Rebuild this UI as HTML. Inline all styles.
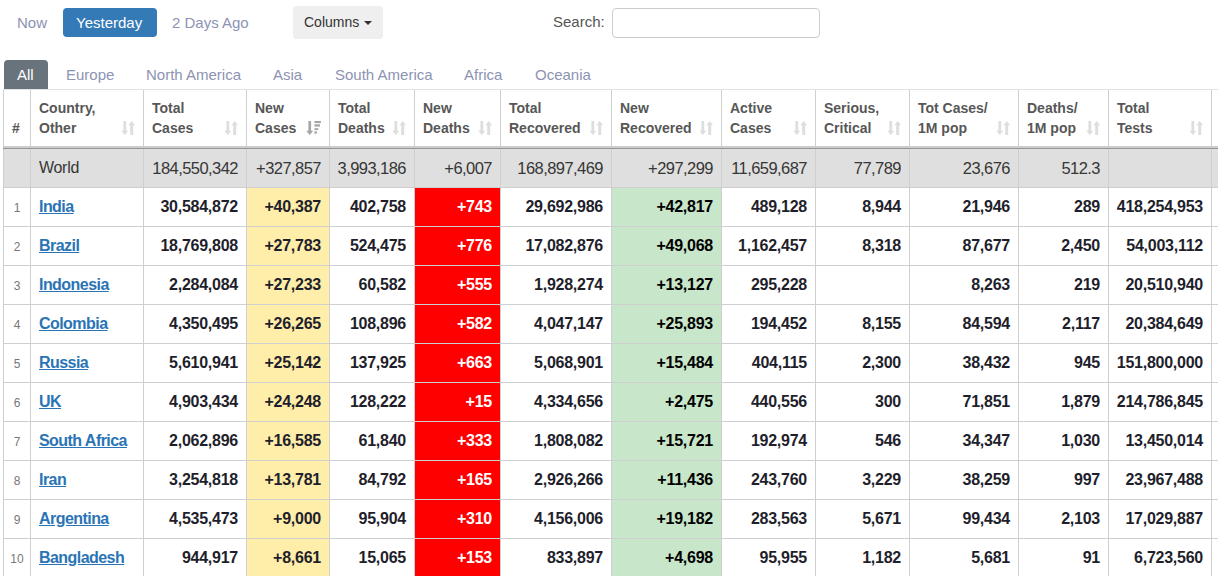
<!DOCTYPE html>
<html><head><meta charset="utf-8"><title>Coronavirus table</title>
<style>
html,body{margin:0;padding:0;background:#fff;}
body{width:1218px;height:576px;overflow:hidden;position:relative;font-family:"Liberation Sans",sans-serif;}
.a{position:absolute;white-space:nowrap;}
.nav{font-size:15px;color:#8c93b3;line-height:20px;}
.btnp{position:absolute;left:63px;top:8px;width:94px;height:29px;background:#337ab7;border-radius:4px;}
.btnp span{position:absolute;left:13px;top:5px;font-size:15px;color:#fff;line-height:20px;}
.colbtn{position:absolute;left:293px;top:6px;width:90px;height:33px;background:#efefef;border-radius:4px;}
.colbtn span{position:absolute;left:11px;top:6px;font-size:14px;color:#333;line-height:20px;}
.caret{position:absolute;left:71px;top:15px;width:0;height:0;border-left:4px solid transparent;border-right:4px solid transparent;border-top:4px solid #333;}
.search{font-size:15px;color:#555;line-height:20px;}
.inp{position:absolute;left:612px;top:8px;width:206px;height:28px;border:1px solid #cccccc;border-radius:4px;}
.tabact{position:absolute;left:4px;top:60px;width:44px;height:30px;background:#68737c;border-radius:4px 4px 0 0;}
.tabact span{position:absolute;left:13px;top:5px;font-size:15px;color:#fff;line-height:20px;}
.tab{font-size:15px;color:#8c93b3;line-height:20px;}
.tbl{position:absolute;left:3px;top:89px;border-top:1px solid #e2e2e2;}
.r{position:relative;display:flex;}
.c{position:relative;box-sizing:border-box;border-left:1px solid #cfcfcf;flex:none;overflow:hidden;}
.hd .c{height:57px;}
.hd .t{position:absolute;left:8px;bottom:9px;font-size:14px;font-weight:bold;color:#575757;line-height:20px;}
.hd .si{position:absolute;right:8px;top:31px;}
.hline1{position:absolute;left:3px;top:146px;width:1215px;height:2px;background:#cdcdcd;}
.hline2{position:absolute;left:3px;top:148px;width:1215px;height:1px;background:#979797;}
.w .c{height:39px;background:#dfdfdf;border-bottom:1px solid #cfcfcf;}
.b .c{height:39px;border-bottom:1px solid #cfcfcf;}
.v{position:absolute;right:8px;top:9px;line-height:20px;}
.w .v{font-size:16.5px;letter-spacing:-0.55px;color:#363636;}
.b .v{font-size:16px;letter-spacing:-0.25px;font-weight:bold;color:#1f1f2c;}
.w .nm{position:absolute;left:8px;top:9px;font-size:16px;letter-spacing:-0.3px;color:#363636;line-height:20px;}
.b .nm{position:absolute;left:8px;top:9px;font-size:16px;letter-spacing:-0.55px;font-weight:bold;color:#2a74b6;text-decoration:underline;line-height:20px;}
.b .rk{position:absolute;left:0;width:26px;text-align:center;top:10px;font-size:12px;color:#777;line-height:20px;}
.y{background:#ffeeaa;}
.red{background:#ff0000;}
.red .v{color:#fff !important;}
.g{background:#c8e6c9;}
.g .v{color:#000 !important;}
.sy{display:inline-block;transform:none;transform-origin:0 15px;}
</style></head><body>

<span class="a nav sy" style="left:17px;top:13px">Now</span>
<div class="btnp"><span class="sy">Yesterday</span></div>
<span class="a nav sy" style="left:172px;top:13px">2 Days Ago</span>
<div class="colbtn"><span>Columns</span><i class="caret"></i></div>
<span class="a search sy" style="left:553px;top:12px">Search:</span>
<div class="inp"></div>
<div class="tabact"><span class="sy">All</span></div>
<span class="a tab sy" style="left:66px;top:65px">Europe</span>
<span class="a tab sy" style="left:146px;top:65px">North America</span>
<span class="a tab sy" style="left:273px;top:65px">Asia</span>
<span class="a tab sy" style="left:335px;top:65px">South America</span>
<span class="a tab sy" style="left:464px;top:65px">Africa</span>
<span class="a tab sy" style="left:535px;top:65px">Oceania</span>
<div class="tbl">
<div class="r hd">
<div class="c" style="width:27px"><span class="t" style="left:8px">#</span></div>
<div class="c" style="width:113px"><span class="t">Country,<br>Other</span><svg class="si" width="14" height="14" viewBox="0 0 14 14"><path d="M2.4 0h2.8v9.7h2.1L3.8 14 0.3 9.7h2.1z" fill="#dedede"/><path d="M9.2 14h3V4.3h1.9L10.7 0 7.3 4.3h1.9z" fill="#dedede"/></svg></div>
<div class="c" style="width:103px"><span class="t">Total<br>Cases</span><svg class="si" width="14" height="14" viewBox="0 0 14 14"><path d="M2.4 0h2.8v9.7h2.1L3.8 14 0.3 9.7h2.1z" fill="#dedede"/><path d="M9.2 14h3V4.3h1.9L10.7 0 7.3 4.3h1.9z" fill="#dedede"/></svg></div>
<div class="c" style="width:83px"><span class="t">New<br>Cases</span><svg class="si" width="15" height="14" viewBox="0 0 15 14"><path d="M2.4 0h2.7v9.7h2.2L3.75 14 0.2 9.7h2.2z" fill="#a6a6a6"/><rect x="8.4" y="0" width="6.5" height="2.1" fill="#a6a6a6"/><rect x="8.4" y="3.3" width="5.6" height="2.3" fill="#a6a6a6"/><rect x="8.4" y="7.2" width="4" height="1.9" fill="#a6a6a6"/><rect x="8.4" y="10.3" width="2.5" height="2.4" fill="#a6a6a6"/></svg></div>
<div class="c" style="width:85px"><span class="t">Total<br>Deaths</span><svg class="si" width="14" height="14" viewBox="0 0 14 14"><path d="M2.4 0h2.8v9.7h2.1L3.8 14 0.3 9.7h2.1z" fill="#dedede"/><path d="M9.2 14h3V4.3h1.9L10.7 0 7.3 4.3h1.9z" fill="#dedede"/></svg></div>
<div class="c" style="width:86px"><span class="t">New<br>Deaths</span><svg class="si" width="14" height="14" viewBox="0 0 14 14"><path d="M2.4 0h2.8v9.7h2.1L3.8 14 0.3 9.7h2.1z" fill="#dedede"/><path d="M9.2 14h3V4.3h1.9L10.7 0 7.3 4.3h1.9z" fill="#dedede"/></svg></div>
<div class="c" style="width:111px"><span class="t">Total<br>Recovered</span><svg class="si" width="14" height="14" viewBox="0 0 14 14"><path d="M2.4 0h2.8v9.7h2.1L3.8 14 0.3 9.7h2.1z" fill="#dedede"/><path d="M9.2 14h3V4.3h1.9L10.7 0 7.3 4.3h1.9z" fill="#dedede"/></svg></div>
<div class="c" style="width:110px"><span class="t">New<br>Recovered</span><svg class="si" width="14" height="14" viewBox="0 0 14 14"><path d="M2.4 0h2.8v9.7h2.1L3.8 14 0.3 9.7h2.1z" fill="#dedede"/><path d="M9.2 14h3V4.3h1.9L10.7 0 7.3 4.3h1.9z" fill="#dedede"/></svg></div>
<div class="c" style="width:94px"><span class="t">Active<br>Cases</span><svg class="si" width="14" height="14" viewBox="0 0 14 14"><path d="M2.4 0h2.8v9.7h2.1L3.8 14 0.3 9.7h2.1z" fill="#dedede"/><path d="M9.2 14h3V4.3h1.9L10.7 0 7.3 4.3h1.9z" fill="#dedede"/></svg></div>
<div class="c" style="width:94px"><span class="t">Serious,<br>Critical</span><svg class="si" width="14" height="14" viewBox="0 0 14 14"><path d="M2.4 0h2.8v9.7h2.1L3.8 14 0.3 9.7h2.1z" fill="#dedede"/><path d="M9.2 14h3V4.3h1.9L10.7 0 7.3 4.3h1.9z" fill="#dedede"/></svg></div>
<div class="c" style="width:109px"><span class="t">Tot&nbsp;Cases/<br>1M pop</span><svg class="si" width="14" height="14" viewBox="0 0 14 14"><path d="M2.4 0h2.8v9.7h2.1L3.8 14 0.3 9.7h2.1z" fill="#dedede"/><path d="M9.2 14h3V4.3h1.9L10.7 0 7.3 4.3h1.9z" fill="#dedede"/></svg></div>
<div class="c" style="width:90px"><span class="t">Deaths/<br>1M pop</span><svg class="si" width="14" height="14" viewBox="0 0 14 14"><path d="M2.4 0h2.8v9.7h2.1L3.8 14 0.3 9.7h2.1z" fill="#dedede"/><path d="M9.2 14h3V4.3h1.9L10.7 0 7.3 4.3h1.9z" fill="#dedede"/></svg></div>
<div class="c" style="width:103px"><span class="t">Total<br>Tests</span><svg class="si" width="14" height="14" viewBox="0 0 14 14"><path d="M2.4 0h2.8v9.7h2.1L3.8 14 0.3 9.7h2.1z" fill="#dedede"/><path d="M9.2 14h3V4.3h1.9L10.7 0 7.3 4.3h1.9z" fill="#dedede"/></svg></div>
<div class="c" style="width:109px"><span class="t">Test/<br>1M pop</span><svg class="si" width="14" height="14" viewBox="0 0 14 14"><path d="M2.4 0h2.8v9.7h2.1L3.8 14 0.3 9.7h2.1z" fill="#dedede"/><path d="M9.2 14h3V4.3h1.9L10.7 0 7.3 4.3h1.9z" fill="#dedede"/></svg></div>
</div>
</div>
<div class="hline1"></div><div class="hline2"></div>
<div class="tbl" style="top:149px;border-top:none">
<div class="r w"><div class="c" style="width:27px"></div><div class="c" style="width:113px"><span class="nm">World</span></div><div class="c" style="width:103px"><span class="v">184,550,342</span></div><div class="c" style="width:83px"><span class="v">+327,857</span></div><div class="c" style="width:85px"><span class="v">3,993,186</span></div><div class="c" style="width:86px"><span class="v">+6,007</span></div><div class="c" style="width:111px"><span class="v">168,897,469</span></div><div class="c" style="width:110px"><span class="v">+297,299</span></div><div class="c" style="width:94px"><span class="v">11,659,687</span></div><div class="c" style="width:94px"><span class="v">77,789</span></div><div class="c" style="width:109px"><span class="v">23,676</span></div><div class="c" style="width:90px"><span class="v">512.3</span></div><div class="c" style="width:103px"></div><div class="c" style="width:109px"></div></div>
<div class="r b"><div class="c" style="width:27px"><span class="rk">1</span></div><div class="c" style="width:113px"><span class="nm">India</span></div><div class="c" style="width:103px"><span class="v">30,584,872</span></div><div class="c y" style="width:83px"><span class="v">+40,387</span></div><div class="c" style="width:85px"><span class="v">402,758</span></div><div class="c red" style="width:86px"><span class="v">+743</span></div><div class="c" style="width:111px"><span class="v">29,692,986</span></div><div class="c g" style="width:110px"><span class="v">+42,817</span></div><div class="c" style="width:94px"><span class="v">489,128</span></div><div class="c" style="width:94px"><span class="v">8,944</span></div><div class="c" style="width:109px"><span class="v">21,946</span></div><div class="c" style="width:90px"><span class="v">289</span></div><div class="c" style="width:103px"><span class="v">418,254,953</span></div><div class="c" style="width:109px"></div></div>
<div class="r b"><div class="c" style="width:27px"><span class="rk">2</span></div><div class="c" style="width:113px"><span class="nm">Brazil</span></div><div class="c" style="width:103px"><span class="v">18,769,808</span></div><div class="c y" style="width:83px"><span class="v">+27,783</span></div><div class="c" style="width:85px"><span class="v">524,475</span></div><div class="c red" style="width:86px"><span class="v">+776</span></div><div class="c" style="width:111px"><span class="v">17,082,876</span></div><div class="c g" style="width:110px"><span class="v">+49,068</span></div><div class="c" style="width:94px"><span class="v">1,162,457</span></div><div class="c" style="width:94px"><span class="v">8,318</span></div><div class="c" style="width:109px"><span class="v">87,677</span></div><div class="c" style="width:90px"><span class="v">2,450</span></div><div class="c" style="width:103px"><span class="v">54,003,112</span></div><div class="c" style="width:109px"></div></div>
<div class="r b"><div class="c" style="width:27px"><span class="rk">3</span></div><div class="c" style="width:113px"><span class="nm">Indonesia</span></div><div class="c" style="width:103px"><span class="v">2,284,084</span></div><div class="c y" style="width:83px"><span class="v">+27,233</span></div><div class="c" style="width:85px"><span class="v">60,582</span></div><div class="c red" style="width:86px"><span class="v">+555</span></div><div class="c" style="width:111px"><span class="v">1,928,274</span></div><div class="c g" style="width:110px"><span class="v">+13,127</span></div><div class="c" style="width:94px"><span class="v">295,228</span></div><div class="c" style="width:94px"></div><div class="c" style="width:109px"><span class="v">8,263</span></div><div class="c" style="width:90px"><span class="v">219</span></div><div class="c" style="width:103px"><span class="v">20,510,940</span></div><div class="c" style="width:109px"></div></div>
<div class="r b"><div class="c" style="width:27px"><span class="rk">4</span></div><div class="c" style="width:113px"><span class="nm">Colombia</span></div><div class="c" style="width:103px"><span class="v">4,350,495</span></div><div class="c y" style="width:83px"><span class="v">+26,265</span></div><div class="c" style="width:85px"><span class="v">108,896</span></div><div class="c red" style="width:86px"><span class="v">+582</span></div><div class="c" style="width:111px"><span class="v">4,047,147</span></div><div class="c g" style="width:110px"><span class="v">+25,893</span></div><div class="c" style="width:94px"><span class="v">194,452</span></div><div class="c" style="width:94px"><span class="v">8,155</span></div><div class="c" style="width:109px"><span class="v">84,594</span></div><div class="c" style="width:90px"><span class="v">2,117</span></div><div class="c" style="width:103px"><span class="v">20,384,649</span></div><div class="c" style="width:109px"></div></div>
<div class="r b"><div class="c" style="width:27px"><span class="rk">5</span></div><div class="c" style="width:113px"><span class="nm">Russia</span></div><div class="c" style="width:103px"><span class="v">5,610,941</span></div><div class="c y" style="width:83px"><span class="v">+25,142</span></div><div class="c" style="width:85px"><span class="v">137,925</span></div><div class="c red" style="width:86px"><span class="v">+663</span></div><div class="c" style="width:111px"><span class="v">5,068,901</span></div><div class="c g" style="width:110px"><span class="v">+15,484</span></div><div class="c" style="width:94px"><span class="v">404,115</span></div><div class="c" style="width:94px"><span class="v">2,300</span></div><div class="c" style="width:109px"><span class="v">38,432</span></div><div class="c" style="width:90px"><span class="v">945</span></div><div class="c" style="width:103px"><span class="v">151,800,000</span></div><div class="c" style="width:109px"></div></div>
<div class="r b"><div class="c" style="width:27px"><span class="rk">6</span></div><div class="c" style="width:113px"><span class="nm">UK</span></div><div class="c" style="width:103px"><span class="v">4,903,434</span></div><div class="c y" style="width:83px"><span class="v">+24,248</span></div><div class="c" style="width:85px"><span class="v">128,222</span></div><div class="c red" style="width:86px"><span class="v">+15</span></div><div class="c" style="width:111px"><span class="v">4,334,656</span></div><div class="c g" style="width:110px"><span class="v">+2,475</span></div><div class="c" style="width:94px"><span class="v">440,556</span></div><div class="c" style="width:94px"><span class="v">300</span></div><div class="c" style="width:109px"><span class="v">71,851</span></div><div class="c" style="width:90px"><span class="v">1,879</span></div><div class="c" style="width:103px"><span class="v">214,786,845</span></div><div class="c" style="width:109px"></div></div>
<div class="r b"><div class="c" style="width:27px"><span class="rk">7</span></div><div class="c" style="width:113px"><span class="nm">South Africa</span></div><div class="c" style="width:103px"><span class="v">2,062,896</span></div><div class="c y" style="width:83px"><span class="v">+16,585</span></div><div class="c" style="width:85px"><span class="v">61,840</span></div><div class="c red" style="width:86px"><span class="v">+333</span></div><div class="c" style="width:111px"><span class="v">1,808,082</span></div><div class="c g" style="width:110px"><span class="v">+15,721</span></div><div class="c" style="width:94px"><span class="v">192,974</span></div><div class="c" style="width:94px"><span class="v">546</span></div><div class="c" style="width:109px"><span class="v">34,347</span></div><div class="c" style="width:90px"><span class="v">1,030</span></div><div class="c" style="width:103px"><span class="v">13,450,014</span></div><div class="c" style="width:109px"></div></div>
<div class="r b"><div class="c" style="width:27px"><span class="rk">8</span></div><div class="c" style="width:113px"><span class="nm">Iran</span></div><div class="c" style="width:103px"><span class="v">3,254,818</span></div><div class="c y" style="width:83px"><span class="v">+13,781</span></div><div class="c" style="width:85px"><span class="v">84,792</span></div><div class="c red" style="width:86px"><span class="v">+165</span></div><div class="c" style="width:111px"><span class="v">2,926,266</span></div><div class="c g" style="width:110px"><span class="v">+11,436</span></div><div class="c" style="width:94px"><span class="v">243,760</span></div><div class="c" style="width:94px"><span class="v">3,229</span></div><div class="c" style="width:109px"><span class="v">38,259</span></div><div class="c" style="width:90px"><span class="v">997</span></div><div class="c" style="width:103px"><span class="v">23,967,488</span></div><div class="c" style="width:109px"></div></div>
<div class="r b"><div class="c" style="width:27px"><span class="rk">9</span></div><div class="c" style="width:113px"><span class="nm">Argentina</span></div><div class="c" style="width:103px"><span class="v">4,535,473</span></div><div class="c y" style="width:83px"><span class="v">+9,000</span></div><div class="c" style="width:85px"><span class="v">95,904</span></div><div class="c red" style="width:86px"><span class="v">+310</span></div><div class="c" style="width:111px"><span class="v">4,156,006</span></div><div class="c g" style="width:110px"><span class="v">+19,182</span></div><div class="c" style="width:94px"><span class="v">283,563</span></div><div class="c" style="width:94px"><span class="v">5,671</span></div><div class="c" style="width:109px"><span class="v">99,434</span></div><div class="c" style="width:90px"><span class="v">2,103</span></div><div class="c" style="width:103px"><span class="v">17,029,887</span></div><div class="c" style="width:109px"></div></div>
<div class="r b"><div class="c" style="width:27px"><span class="rk">10</span></div><div class="c" style="width:113px"><span class="nm">Bangladesh</span></div><div class="c" style="width:103px"><span class="v">944,917</span></div><div class="c y" style="width:83px"><span class="v">+8,661</span></div><div class="c" style="width:85px"><span class="v">15,065</span></div><div class="c red" style="width:86px"><span class="v">+153</span></div><div class="c" style="width:111px"><span class="v">833,897</span></div><div class="c g" style="width:110px"><span class="v">+4,698</span></div><div class="c" style="width:94px"><span class="v">95,955</span></div><div class="c" style="width:94px"><span class="v">1,182</span></div><div class="c" style="width:109px"><span class="v">5,681</span></div><div class="c" style="width:90px"><span class="v">91</span></div><div class="c" style="width:103px"><span class="v">6,723,560</span></div><div class="c" style="width:109px"></div></div>
</div>
</body></html>
